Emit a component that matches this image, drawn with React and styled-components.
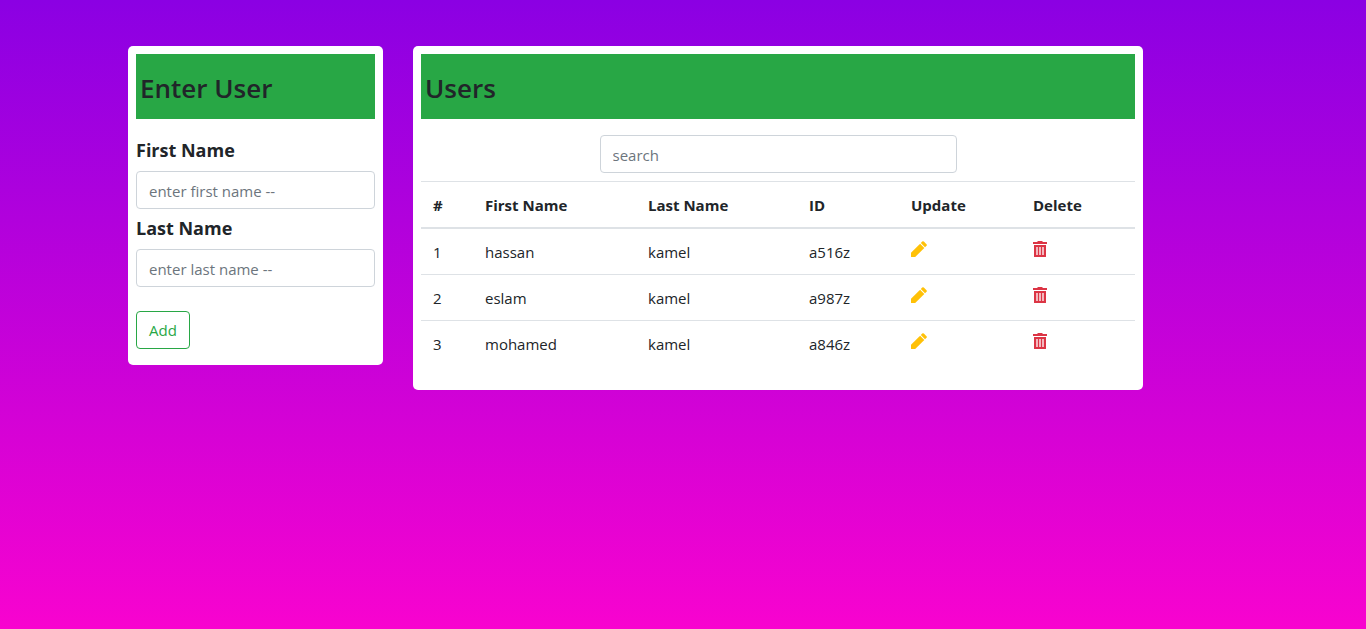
import React, { useState } from "react";
import styled, { createGlobalStyle } from "styled-components";

const GlobalStyle = createGlobalStyle`
  *, *::before, *::after { box-sizing: border-box; }
  body {
    margin: 0;
    color: #212529;
    font-family: "Segoe UI", "Open Sans", "Noto Sans", sans-serif;
    font-size: 15px;
    line-height: 24px;
  }
`;

const Page = styled.div`
  min-height: 100vh;
  padding: 46px 15px;
  background: linear-gradient(#8b00e3, #f803cf);
`;

const Container = styled.main`
  display: grid;
  grid-template-columns: repeat(12, minmax(0, 1fr));
  align-items: start;
  column-gap: 30px;
  max-width: 1110px;
  margin: 0 auto;
`;

const Card = styled.section`
  grid-column: span ${({ $span }) => $span};
  padding: 8px 8px ${({ $bottom }) => $bottom}px;
  background: #fff;
  border-radius: 5px;

  @media (max-width: 767px) {
    grid-column: 1 / -1;
    margin-bottom: 24px;
  }
`;

const Title = styled.h3`
  margin: 0;
  padding: 17px 4px 14px;
  background: #28a745;
  font-size: 26px;
  font-weight: 600;
  line-height: 34px;
`;

const Form = styled.form`
  padding-top: 12px;
`;

const Label = styled.label`
  display: block;
  padding: 7px 0 9px;
  font-size: 18px;
  font-weight: 700;
`;

const Input = styled.input`
  display: block;
  width: ${({ $width }) => $width || "100%"};
  height: 38px;
  margin: 0 auto;
  padding: 7px 12px 5px;
  border: 1px solid #ced4da;
  border-radius: 4px;
  background: #fff;
  color: #495057;
  font: inherit;

  &::placeholder { color: #6c757d; opacity: 1; }
`;

const AddButton = styled.button`
  margin-top: 24px;
  height: 38px;
  padding: 6px 12px;
  border: 1px solid #28a745;
  border-radius: 4px;
  background: transparent;
  color: #28a745;
  font: inherit;
  cursor: pointer;
`;

const SearchBar = styled.div`
  padding: 16px 0 8px;
`;

const Table = styled.table`
  width: 100%;
  border-spacing: 0;
  text-align: left;
`;

const Column = styled.col`
  width: ${({ $width }) => $width}px;
`;

const HeadCell = styled.th`
  padding: 11px 12px 10px;
  border-top: 1px solid #dee2e6;
  border-bottom: 2px solid #dee2e6;
  font-weight: 700;
`;

const Cell = styled.td`
  padding: 11px 12px 10px;
  vertical-align: top;

  tr + tr > & { border-top: 1px solid #dee2e6; }
`;

const IconButton = styled.button`
  display: block;
  padding: 1px 0 0;
  border: 0;
  background: none;
  color: ${({ $color }) => $color};
  cursor: pointer;

  svg { display: block; }
`;

const PencilIcon = () => (
  <svg width="16" height="16" viewBox="0 0 16 16" fill="currentColor" aria-hidden="true">
    <path d="M0 11.8 9.1 2.7 13.3 6.9 4.2 16H.5Q0 16 0 15.5Z" />
    <path d="M9.8 2 11.2.5Q12-.2 12.8.5L15.5 3.2Q16.3 4 15.5 4.8L14 6.2Z" />
  </svg>
);

const TrashIcon = () => (
  <svg width="14" height="16" viewBox="0 0 14 16" fill="currentColor" aria-hidden="true">
    <path d="M4.5 0h5v1H14v2H0V1h4.5z" />
    <path
      fillRule="evenodd"
      d="M1 4h12v11.5q0 .5-.5.5h-11q-.5 0-.5-.5zM3 6v8h2V6zM6 6v8h2V6zM9 6v8h2V6z"
    />
    <path fillOpacity="0.35" d="M3 6h2v8H3zM6 6h2v8H6zM9 6h2v8H9z" />
  </svg>
);

const columns = [
  { name: "#", width: 52 },
  { name: "First Name", width: 163 },
  { name: "Last Name", width: 161 },
  { name: "ID", width: 102 },
  { name: "Update", width: 122 },
  { name: "Delete", width: 114 },
];

const initialUsers = [
  { first: "hassan", last: "kamel", id: "a516z" },
  { first: "eslam", last: "kamel", id: "a987z" },
  { first: "mohamed", last: "kamel", id: "a846z" },
];

export default function App() {
  const [users, setUsers] = useState(initialUsers);
  const [query, setQuery] = useState("");
  const shown = users.filter((u) => `${u.first} ${u.last}`.includes(query));

  return (
    <>
      <GlobalStyle />
      <Page>
        <Container>
          <Card $span={3} $bottom={16}>
            <Title>Enter User</Title>
            <Form onSubmit={(e) => e.preventDefault()}>
              <Label htmlFor="first">First Name</Label>
              <Input id="first" placeholder="enter first name --" />
              <Label htmlFor="last">Last Name</Label>
              <Input id="last" placeholder="enter last name --" />
              <AddButton type="submit">Add</AddButton>
            </Form>
          </Card>
          <Card $span={8} $bottom={24}>
            <Title>Users</Title>
            <SearchBar>
              <Input
                $width="50%"
                aria-label="search"
                placeholder="search"
                value={query}
                onChange={(e) => setQuery(e.target.value)}
              />
            </SearchBar>
            <Table>
              <colgroup>
                {columns.map(({ name, width }) => (
                  <Column key={name} $width={width} />
                ))}
              </colgroup>
              <thead>
                <tr>
                  {columns.map(({ name }) => (
                    <HeadCell key={name} scope="col">{name}</HeadCell>
                  ))}
                </tr>
              </thead>
              <tbody>
                {shown.map((user, index) => (
                  <tr key={user.id}>
                    <Cell>{index + 1}</Cell>
                    <Cell>{user.first}</Cell>
                    <Cell>{user.last}</Cell>
                    <Cell>{user.id}</Cell>
                    <Cell>
                      <IconButton type="button" $color="#ffc107" aria-label={`Update ${user.first}`}>
                        <PencilIcon />
                      </IconButton>
                    </Cell>
                    <Cell>
                      <IconButton
                        type="button"
                        $color="#dc3545"
                        aria-label={`Delete ${user.first}`}
                        onClick={() => setUsers(users.filter((u) => u !== user))}
                      >
                        <TrashIcon />
                      </IconButton>
                    </Cell>
                  </tr>
                ))}
              </tbody>
            </Table>
          </Card>
        </Container>
      </Page>
    </>
  );
}
